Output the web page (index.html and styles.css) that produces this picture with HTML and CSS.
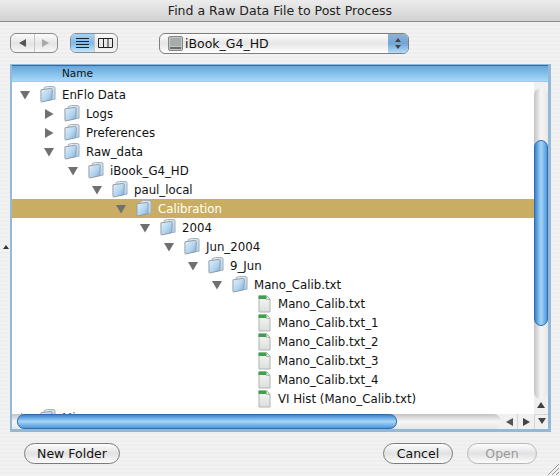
FILE: index.html
```html
<!DOCTYPE html>
<html lang="en">
  <head>
    <meta charset="UTF-8" />
    <title>Find a Raw Data File to Post Process</title>
    <link rel="stylesheet" href="styles.css">
  </head>
  <body>
    <svg class="sprites" width="0" height="0">
      <defs>
        <linearGradient id="folder-back" x1="0" y1="0" x2="1" y2="1">
          <stop offset="0" stop-color="#eef4f9" />
          <stop offset="1" stop-color="#a9cdea" />
        </linearGradient>
        <linearGradient id="folder-front" x1="0" y1="0" x2="1" y2="1">
          <stop offset="0" stop-color="#e6f0f8" />
          <stop offset="0.55" stop-color="#b4d5ef" />
          <stop offset="1" stop-color="#78aedd" />
        </linearGradient>
        <linearGradient id="page" x1="0" y1="0" x2="0" y2="1">
          <stop offset="0" stop-color="#f6f8f6" />
          <stop offset="1" stop-color="#dcdedc" />
        </linearGradient>
        <symbol id="folder" viewBox="0 0 17 18">
          <path d="M4.5 1.5 L8 .5 H14 Q16 .5 16 2 V14 L5 15.5 Z" fill="url(#folder-back)" stroke="#a3adb5" />
          <path d="M1 4 L11.5 2.5 Q13 2.5 13 4 L12.5 14.5 L2 17 Q1 17 1 16 Z" fill="url(#folder-front)" stroke="#8f9aa3" />
        </symbol>
        <symbol id="doc" viewBox="0 0 13 18">
          <path d="M1 1 H8.5 L12 4.5 V17 H1 Z" fill="url(#page)" stroke="#b0b4b2" />
          <path d="M.5 .5 H8.5 L12 4 H.5 Z" fill="#3f9f4c" />
          <path d="M8.5 1 V4.5 H12" fill="#eef1ee" stroke="#b0b4b2" />
        </symbol>
        <symbol id="open" viewBox="0 0 10 10">
          <path d="M0 1 H10 L5 9.5 Z" fill="#707070" />
        </symbol>
        <symbol id="closed" viewBox="0 0 10 10">
          <path d="M1 0 L9.5 5 L1 10 Z" fill="#707070" />
        </symbol>
      </defs>
    </svg>

    <div class="dialog">
      <header class="titlebar">Find a Raw Data File to Post Process</header>

      <div class="toolbar">
        <div class="segment nav-seg">
          <span class="seg-item"><i class="arrow-l"></i></span>
          <span class="seg-item"><i class="arrow-r off"></i></span>
        </div>
        <div class="segment view-seg">
          <span class="seg-item on">
            <svg class="tool-icon" width="13" height="12" viewBox="0 0 13 12"><path d="M0 1.5H13M0 4.5H13M0 7.5H13M0 10.5H13" stroke="#222" fill="none" /></svg>
          </span>
          <span class="seg-item">
            <svg class="tool-icon" width="15" height="12" viewBox="0 0 15 12"><path d="M.5 1.5H14.5V10.5H.5ZM5.5 1.5V10.5M10 1.5V10.5" stroke="#222" fill="none" /></svg>
          </span>
        </div>
        <div class="popup">
          <svg class="disk" width="17" height="17" viewBox="0 0 17 17">
            <rect x="1.5" y="1.5" width="14" height="14" rx="1.5" fill="#c2c5c5" stroke="#85888a" />
            <path d="M3 4H14M3 6H14M3 8H14M3 10H14" stroke="#8f9292" />
            <rect x="3" y="12" width="11" height="2" fill="#6a6d6d" />
          </svg>
          <span class="popup-label">iBook_G4_HD</span>
          <span class="stepper"><i class="step-up"></i><i class="step-down"></i></span>
        </div>
      </div>

      <section class="browser">
        <div class="col-head"><span class="col-name">Name</span></div>
        <div class="browser-main">
          <ul class="tree">
            <li class="row d0"><svg class="twist"><use href="#open" /></svg><svg class="folder"><use href="#folder" /></svg><span>EnFlo Data</span></li>
            <li class="row d1"><svg class="twist"><use href="#closed" /></svg><svg class="folder"><use href="#folder" /></svg><span>Logs</span></li>
            <li class="row d1"><svg class="twist"><use href="#closed" /></svg><svg class="folder"><use href="#folder" /></svg><span>Preferences</span></li>
            <li class="row d1"><svg class="twist"><use href="#open" /></svg><svg class="folder"><use href="#folder" /></svg><span>Raw_data</span></li>
            <li class="row d2"><svg class="twist"><use href="#open" /></svg><svg class="folder"><use href="#folder" /></svg><span>iBook_G4_HD</span></li>
            <li class="row d3"><svg class="twist"><use href="#open" /></svg><svg class="folder"><use href="#folder" /></svg><span>paul_local</span></li>
            <li class="row d4 selected"><svg class="twist"><use href="#open" /></svg><svg class="folder"><use href="#folder" /></svg><span>Calibration</span></li>
            <li class="row d5"><svg class="twist"><use href="#open" /></svg><svg class="folder"><use href="#folder" /></svg><span>2004</span></li>
            <li class="row d6"><svg class="twist"><use href="#open" /></svg><svg class="folder"><use href="#folder" /></svg><span>Jun_2004</span></li>
            <li class="row d7"><svg class="twist"><use href="#open" /></svg><svg class="folder"><use href="#folder" /></svg><span>9_Jun</span></li>
            <li class="row d8"><svg class="twist"><use href="#open" /></svg><svg class="folder"><use href="#folder" /></svg><span>Mano_Calib.txt</span></li>
            <li class="row file"><svg class="doc"><use href="#doc" /></svg><span>Mano_Calib.txt</span></li>
            <li class="row file"><svg class="doc"><use href="#doc" /></svg><span>Mano_Calib.txt_1</span></li>
            <li class="row file"><svg class="doc"><use href="#doc" /></svg><span>Mano_Calib.txt_2</span></li>
            <li class="row file"><svg class="doc"><use href="#doc" /></svg><span>Mano_Calib.txt_3</span></li>
            <li class="row file"><svg class="doc"><use href="#doc" /></svg><span>Mano_Calib.txt_4</span></li>
            <li class="row file"><svg class="doc"><use href="#doc" /></svg><span>VI Hist (Mano_Calib.txt)</span></li>
            <li class="row d0 gray"><svg class="twist"><use href="#closed" /></svg><svg class="folder"><use href="#folder" /></svg><span>Misc</span></li>
          </ul>
          <div class="vscroll">
            <div class="v-track"><div class="v-thumb"></div></div>
            <div class="v-arrows"><i class="step-up"></i></div>
          </div>
        </div>
        <div class="hscroll">
          <div class="h-track"><div class="h-thumb"></div></div>
          <div class="h-arrows">
            <span class="h-btn"><i class="arrow-l"></i></span>
            <span class="h-btn"><i class="arrow-r"></i></span>
          </div>
          <div class="corner"><i class="step-down"></i></div>
        </div>
      </section>

      <footer class="actions">
        <button class="pill new-folder">New Folder</button>
        <span class="spacer"></span>
        <button class="pill cancel">Cancel</button>
        <button class="pill open-btn" disabled>Open</button>
      </footer>
    </div>

    <span class="splitter"></span>
    <svg class="grip" width="12" height="12" viewBox="0 0 12 12"><path d="M1 12L12 1M5 12L12 5M9 12L12 9" stroke="#9a9a9a" fill="none" /></svg>
  </body>
</html>
```

FILE: styles.css
```css
html,
body {
  margin: 0;
  padding: 0;
}

body {
  width: 560px;
  height: 476px;
  overflow: hidden;
  position: relative;
  font-family: "DejaVu Sans", sans-serif;
  font-size: 11.75px;
  color: #111;
}

.sprites {
  position: absolute;
}

.dialog {
  width: 560px;
  height: 476px;
  display: flex;
  flex-direction: column;
  background: repeating-linear-gradient(#eeeeee 0, #eeeeee 2px, #f2f2f2 2px, #f2f2f2 4px);
}

/* title bar */
.titlebar {
  height: 21px;
  line-height: 21px;
  text-align: center;
  font-size: 12.5px;
  color: #222;
  border-bottom: 1px solid #8e8e8e;
  background: linear-gradient(#ececec, #d2d2d2);
}

/* toolbar */
.toolbar {
  height: 42px;
  padding: 11px 0 0 10px;
  box-sizing: border-box;
  display: flex;
  align-items: flex-start;
}

.segment {
  width: 48px;
  height: 20px;
  display: flex;
  box-sizing: border-box;
  border: 1px solid #8c8c8c;
  border-radius: 6px;
  overflow: hidden;
  background: linear-gradient(#fbfbfb, #e4e4e4 55%, #f8f8f8);
}

.view-seg {
  margin-left: 12px;
}

.seg-item {
  flex: 1;
  display: flex;
  align-items: center;
  justify-content: center;
}

.seg-item + .seg-item {
  border-left: 1px solid #c6c6c6;
}

.seg-item.on {
  background: linear-gradient(#a9d2f0, #7db9e8 50%, #c4e6fb);
}

.arrow-l,
.arrow-r {
  display: block;
  width: 0;
  height: 0;
  border-top: 4px solid transparent;
  border-bottom: 4px solid transparent;
}

.arrow-l {
  border-right: 7px solid #555;
}

.arrow-r {
  border-left: 7px solid #444;
}

.arrow-r.off {
  border-left-color: #a8a8a8;
}

.popup {
  width: 250px;
  height: 21px;
  margin-left: 41px;
  box-sizing: border-box;
  border: 1px solid #7e7e7e;
  border-radius: 6px;
  overflow: hidden;
  display: flex;
  align-items: center;
  padding-left: 7px;
  background: linear-gradient(#fdfdfd, #e6e6e6 50%, #fff);
}

.disk {
  flex: none;
}

.popup-label {
  flex: 1;
  margin-left: 1px;
  font-size: 12.5px;
}

.stepper {
  width: 20px;
  height: 100%;
  display: flex;
  flex-direction: column;
  align-items: center;
  justify-content: center;
  gap: 3px;
  background: linear-gradient(#8fb2d2, #6fa6d8 50%, #b4dcf8);
}

.stepper i {
  border-left-width: 3px;
  border-right-width: 3px;
  border-bottom-width: 4px;
  border-top-width: 4px;
}

.step-up,
.step-down {
  display: block;
  width: 0;
  height: 0;
  border-left: 4px solid transparent;
  border-right: 4px solid transparent;
}

.step-up {
  border-bottom: 6px solid #444;
}

.step-down {
  border-top: 6px solid #444;
}

.stepper .step-up {
  border-top-width: 0;
}

.stepper .step-down {
  border-bottom-width: 0;
}

/* file list */
.browser {
  width: 541px;
  height: 368px;
  margin-left: 10px;
  box-sizing: border-box;
  border: 2px solid #93b8d8;
  border-top-width: 1px;
  border-right-width: 3px;
  border-bottom-width: 3px;
  display: flex;
  flex-direction: column;
  background: #fff;
}

.col-head {
  height: 15px;
  flex: none;
  border-top: 1px solid #2f6ea5;
  border-bottom: 1px solid #8fd0f0;
  background: linear-gradient(#6aa5d8, #7ebbe8 40%, #a8d9f7);
  font-size: 10.5px;
  line-height: 15px;
}

.col-name {
  margin-left: 50px;
}

.browser-main {
  flex: 1;
  min-height: 0;
  display: flex;
  overflow: hidden;
}

.tree {
  flex: 1;
  margin: 0;
  padding: 3px 0 0;
  list-style: none;
  overflow: hidden;
}

.row {
  height: 19px;
  display: flex;
  align-items: center;
  white-space: nowrap;
}

.row.selected {
  background: #c9ad62;
  color: #fff;
}

.row.gray {
  color: #666;
}

.d0 { padding-left: 8px; }
.d1 { padding-left: 32px; }
.d2 { padding-left: 56px; }
.d3 { padding-left: 80px; }
.d4 { padding-left: 104px; }
.d5 { padding-left: 128px; }
.d6 { padding-left: 152px; }
.d7 { padding-left: 176px; }
.d8 { padding-left: 200px; }
.file { padding-left: 246px; }

.twist {
  width: 10px;
  height: 10px;
  flex: none;
}

.folder {
  width: 16px;
  height: 17px;
  flex: none;
  margin-left: 10px;
}

.row .folder + span {
  margin-left: 6px;
}

.doc {
  width: 13px;
  height: 18px;
  flex: none;
}

.doc + span {
  margin-left: 7px;
}

/* scrollbars */
.vscroll {
  width: 14px;
  flex: none;
  display: flex;
  flex-direction: column;
  background: #f0f0f0;
}

.v-track {
  flex: 1;
  margin-top: 6px;
  padding-top: 52px;
  box-sizing: border-box;
  border-radius: 7px;
  background: linear-gradient(90deg, #c2c2c2, #f6f6f6 50%, #e6e6e6);
}

.v-thumb {
  width: 14px;
  height: 186px;
  box-sizing: border-box;
  border: 1px solid #2d6db0;
  border-radius: 7px;
  background: linear-gradient(90deg, #3b85cf, #a6d6f8 50%, #4d97dc);
}

.v-arrows {
  height: 15px;
  flex: none;
  box-sizing: border-box;
  padding-top: 3px;
  display: flex;
  justify-content: center;
  align-items: flex-start;
}

.hscroll {
  height: 15px;
  flex: none;
  display: flex;
  background: #f0f0f0;
}

.h-track {
  flex: 1;
  padding-left: 5px;
  border-radius: 0 8px 8px 0;
  background: linear-gradient(#c2c2c2, #f6f6f6 50%, #e6e6e6);
}

.h-thumb {
  width: 380px;
  height: 15px;
  box-sizing: border-box;
  border: 1px solid #2d6db0;
  border-radius: 7px;
  background: linear-gradient(#3b85cf, #a6d6f8 50%, #4d97dc);
}

.h-arrows {
  width: 33px;
  flex: none;
  display: flex;
}

.h-btn {
  flex: 1;
  display: flex;
  align-items: center;
  justify-content: center;
}

.h-btn + .h-btn {
  border-left: 1px solid #d4d4d4;
}

.corner {
  width: 14px;
  flex: none;
  box-sizing: border-box;
  padding-top: 3px;
  display: flex;
  justify-content: center;
  align-items: flex-start;
  border-top: 1px solid #d4d4d4;
  border-left: 1px solid #d4d4d4;
}

/* bottom buttons */
.actions {
  display: flex;
  padding: 11px 23px 0 24px;
  gap: 14px;
}

.spacer {
  flex: 1;
}

.pill {
  height: 21px;
  box-sizing: border-box;
  padding: 0;
  border: 1px solid #7c7c7c;
  border-radius: 11px;
  font-family: "DejaVu Sans", sans-serif;
  font-size: 12.5px;
  color: #111;
  background: linear-gradient(#fdfdfd, #e2e2e2 50%, #fbfbfb);
}

.new-folder {
  width: 96px;
}

.cancel {
  width: 70px;
}

.open-btn {
  width: 70px;
  color: #9a9a9a;
  border-color: #b8b8b8;
}

/* overlays */
.splitter {
  position: absolute;
  left: 3px;
  top: 245px;
  width: 0;
  height: 0;
  border-left: 3px solid transparent;
  border-right: 3px solid transparent;
  border-bottom: 4px solid #333;
}

.grip {
  position: absolute;
  right: 1px;
  bottom: 1px;
}
```
